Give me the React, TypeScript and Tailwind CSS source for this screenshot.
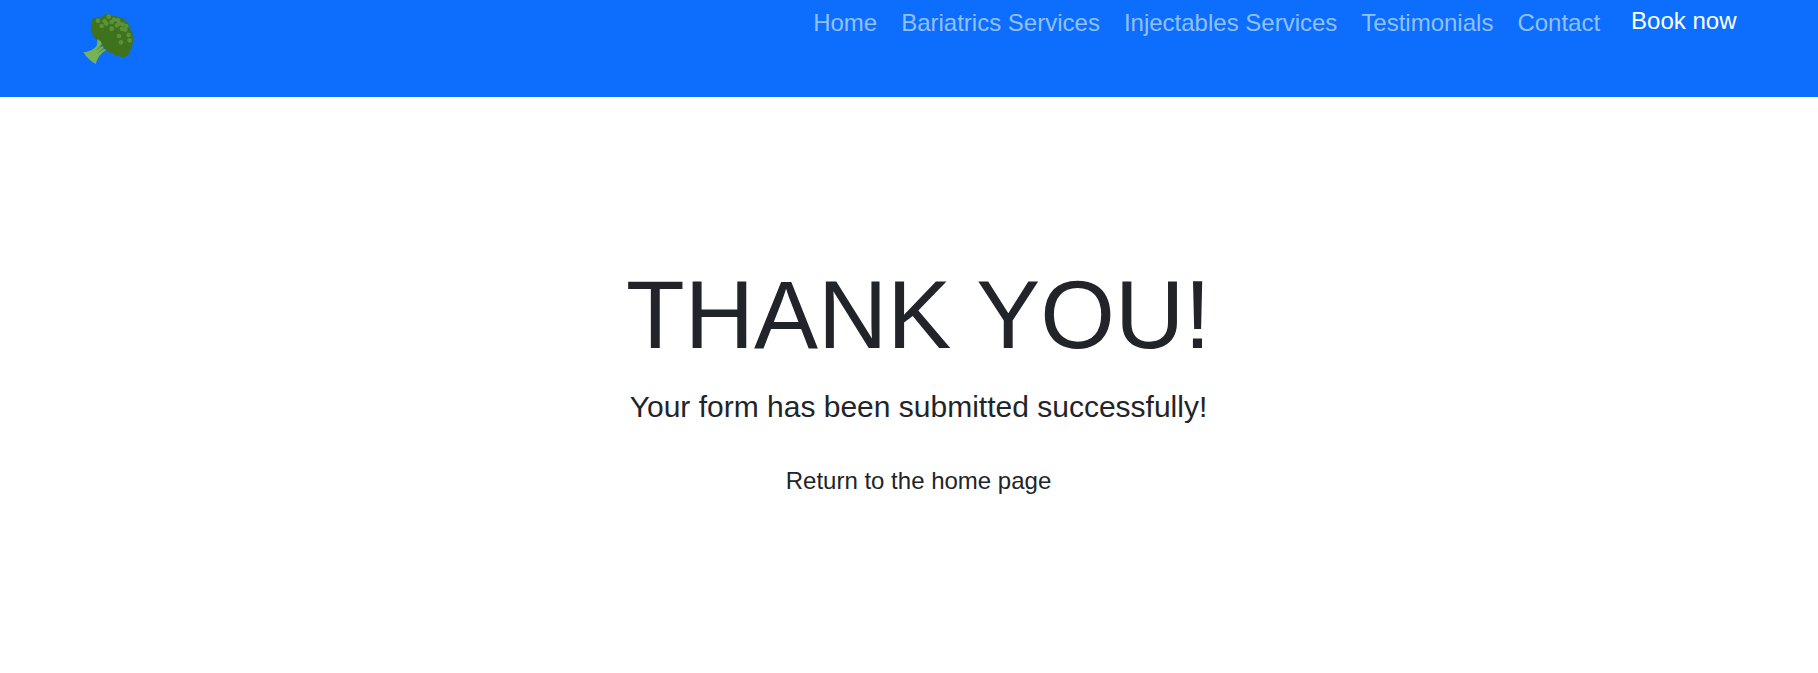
const links = ["Home", "Bariatrics Services", "Injectables Services", "Testimonials", "Contact"];

const florets: [number, number][] = [
  [83, 62], [115, 50], [103, 64], [94, 78], [108, 71], [124, 86], [124, 66], [131, 59], [143, 61],
  [147, 70], [140, 76], [157, 73], [168, 78], [155, 87], [165, 89], [146, 108], [175, 105], [178, 121], [152, 127],
];

function Broccoli() {
  return (
    <svg viewBox="38 39 152 154" className="h-[51.33px] w-[50.67px]" aria-hidden="true">
      <path
        fill="#3e721d"
        d="M84 119 C75 118 67 110 67 102 C60 95 59 84 63 80 C61 66 66 54 77 53 C80 50 89 50 94 53 C98 41 115 38 123 48 C132 45 143 49 147 54 C156 51 163 57 164 65 C176 66 180 76 177 85 C184 91 187 98 187 106 C191 114 191 126 186 132 C188 142 180 150 178 152 C179 163 171 170 163 170 C158 173 150 173 147 168 C137 169 129 164 126 159 C119 159 111 155 106 150 Z"
      />
      <path
        fill="#77b255"
        d="M82 118 C90 121 94 127 94 133 L87 146 L95 139 C97 137 100 142 99 145 L88 155 L101 147 L108 150 C94 157 82 172 76 192 C62 185 48 172 39 157 C57 154 73 147 79 137 C82 131 80 123 82 118 Z"
      />
      <path fill="none" stroke="#5c913b" strokeWidth="3" strokeLinecap="round" d="M93 133 L80 150 M99 145 L84 158" />
      {florets.map(([cx, cy]) => (
        <circle key={`${cx}-${cy}`} cx={cx} cy={cy} r="7" fill="#5c913b" />
      ))}
    </svg>
  );
}

export default function App() {
  return (
    <div className="flex min-h-[673px] flex-col bg-white font-['Liberation_Sans',Arial,sans-serif] text-[#212529]">
      <header className="flex h-[97px] items-start justify-between bg-[#0d6efd] pr-[81.5px] pl-[82.67px]">
        <a href="#" aria-label="Home page" className="pt-[13px]">
          <Broccoli />
        </a>
        <nav className="flex items-start text-2xl leading-9">
          <ul className="flex gap-6 pt-[5px] text-[#92c0fe]">
            {links.map((label) => (
              <li key={label}>
                <a href="#">{label}</a>
              </li>
            ))}
          </ul>
          <a href="#" className="ml-[31px] pt-[3px] text-white">
            Book now
          </a>
        </nav>
      </header>
      <main className="flex flex-col items-center pt-[160px] pl-[19px] text-center">
        <h1 className="text-8xl leading-[115px]">THANK YOU!</h1>
        <p className="mt-3 text-[30px] leading-[45px]">Your form has been submitted successfully!</p>
        <a href="#" className="mt-[34px] text-2xl leading-9">
          Return to the home page
        </a>
      </main>
    </div>
  );
}
